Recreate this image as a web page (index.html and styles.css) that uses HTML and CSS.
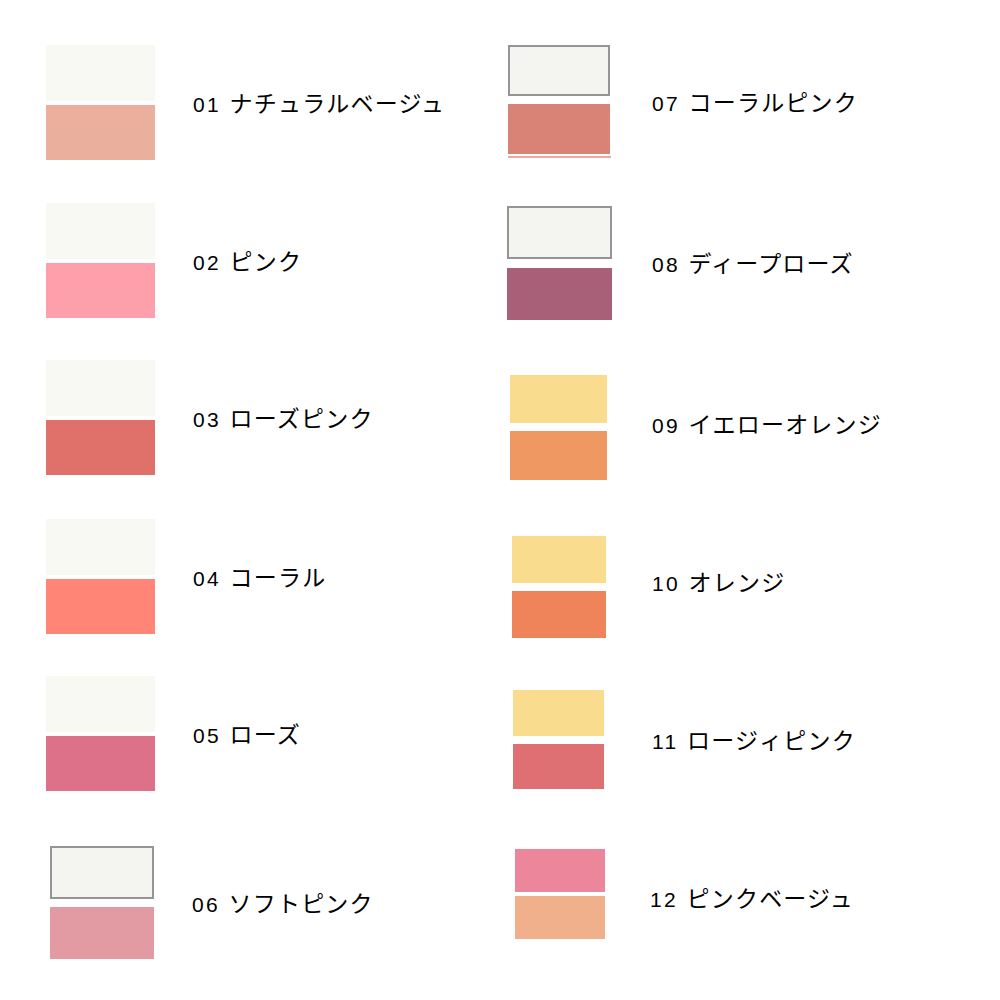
FILE: index.html
```html
<!DOCTYPE html>
<html lang="ja">
<head>
<meta charset="utf-8">
<title>カラーバリエーション</title>
<link rel="stylesheet" href="styles.css">
</head>
<body>
<main class="sheet">
  <section class="col col-left">
    <div class="item i01">
      <div class="swatch"><div class="chip top"></div><div class="chip bottom c01"></div></div>
      <p class="label"><span class="num">01</span> ナチュラルベージュ</p>
    </div>
    <div class="item i02">
      <div class="swatch"><div class="chip top"></div><div class="chip bottom c02"></div></div>
      <p class="label"><span class="num">02</span> ピンク</p>
    </div>
    <div class="item i03">
      <div class="swatch"><div class="chip top"></div><div class="chip bottom c03"></div></div>
      <p class="label"><span class="num">03</span> ローズピンク</p>
    </div>
    <div class="item i04">
      <div class="swatch"><div class="chip top"></div><div class="chip bottom c04"></div></div>
      <p class="label"><span class="num">04</span> コーラル</p>
    </div>
    <div class="item i05">
      <div class="swatch"><div class="chip top"></div><div class="chip bottom c05"></div></div>
      <p class="label"><span class="num">05</span> ローズ</p>
    </div>
    <div class="item i06">
      <div class="swatch"><div class="chip top framed"></div><div class="chip bottom c06"></div></div>
      <p class="label"><span class="num">06</span> ソフトピンク</p>
    </div>
  </section>
  <section class="col col-right">
    <div class="item i07">
      <div class="swatch"><div class="chip top framed"></div><div class="chip bottom c07"></div><div class="chip line"></div></div>
      <p class="label"><span class="num">07</span> コーラルピンク</p>
    </div>
    <div class="item i08">
      <div class="swatch"><div class="chip top framed"></div><div class="chip bottom c08"></div></div>
      <p class="label"><span class="num">08</span> ディープローズ</p>
    </div>
    <div class="item i09">
      <div class="swatch"><div class="chip top yellow"></div><div class="chip bottom c09"></div></div>
      <p class="label"><span class="num">09</span> イエローオレンジ</p>
    </div>
    <div class="item i10">
      <div class="swatch"><div class="chip top yellow"></div><div class="chip bottom c10"></div></div>
      <p class="label"><span class="num">10</span> オレンジ</p>
    </div>
    <div class="item i11">
      <div class="swatch"><div class="chip top yellow"></div><div class="chip bottom c11"></div></div>
      <p class="label"><span class="num">11</span> ロージィピンク</p>
    </div>
    <div class="item i12">
      <div class="swatch"><div class="chip top c12a"></div><div class="chip bottom c12b"></div></div>
      <p class="label"><span class="num">12</span> ピンクベージュ</p>
    </div>
  </section>
</main>
</body>
</html>
```

FILE: styles.css
```css
html, body {
  margin: 0;
  padding: 0;
  background: #ffffff;
}

body {
  width: 1000px;
  height: 1000px;
  overflow: hidden;
  font-family: "Liberation Sans", "Noto Sans CJK JP", sans-serif;
  color: #000000;
}

.sheet {
  display: grid;
  grid-template-columns: 461px 1fr;
  padding-left: 46px;
}

.col {
  display: flex;
  flex-direction: column;
}

.item {
  display: grid;
  align-items: center;
}

.col-left .item {
  grid-template-columns: 147px auto;
}

.col-right .item {
  grid-template-columns: 145px auto;
}

.label {
  margin: 0;
  padding-top: 3px;
  font-size: 23px;
  line-height: 24px;
  letter-spacing: 1.2px;
  word-spacing: 1px;
  white-space: nowrap;
}

.num {
  font-size: 21px;
  letter-spacing: 2.3px;
}

.swatch {
  display: flex;
  flex-direction: column;
}

.chip {
  box-sizing: border-box;
}

.top {
  background: #f8f9f3;
}

.framed {
  background: #f4f5f0;
  border: 2px solid #959595;
}

.yellow {
  background: #fadc8e;
}

/* left column */
.col-left {
  padding-top: 45px;
}

.col-left .swatch {
  width: 109px;
  gap: 4px;
}

.col-left .top {
  height: 56px;
}

.col-left .bottom {
  height: 55px;
}

.i02 {
  margin-top: 43px;
}

.i03 {
  margin-top: 42px;
}

.i04 {
  margin-top: 44px;
}

.i05 {
  margin-top: 42px;
}

.col-left .i06 {
  margin-top: 55px;
  grid-template-columns: 146px auto;
}

.i06 .swatch {
  width: 104px;
  margin-left: 4px;
  gap: 8px;
}

.i06 .top {
  height: 53px;
}

.i06 .bottom {
  height: 52px;
}

.c01 { background: #ebb09d; }
.c02 { background: #fea0ac; }
.c03 { background: #df706a; }
.c04 { background: #ff8677; }
.c05 { background: #dc7189; }
.c06 { background: #e29ba3; }

/* right column */
.col-right {
  padding-top: 45px;
}

.i07 .swatch {
  width: 102px;
  margin-left: 1px;
}

.i07 .top {
  height: 51px;
}

.i07 .bottom {
  height: 50px;
  margin-top: 8px;
}

.i07 .line {
  height: 2px;
  margin-top: 2px;
  width: 103px;
  background: #f2a6a6;
}

.c07 { background: #d98276; }

.i08 {
  margin-top: 48px;
}

.i08 .swatch {
  width: 105px;
  gap: 9px;
}

.i08 .top {
  height: 53px;
}

.i08 .bottom {
  height: 52px;
}

.c08 { background: #a86078; }

.i09 {
  margin-top: 55px;
}

.i09 .swatch {
  width: 97px;
  margin-left: 3px;
  gap: 8px;
}

.i09 .top {
  height: 48px;
}

.i09 .bottom {
  height: 49px;
}

.i09 .label {
  margin-bottom: 8px;
}

.c09 { background: #ef9862; }

.i10 {
  margin-top: 56px;
}

.i10 .swatch {
  width: 94px;
  margin-left: 5px;
  gap: 8px;
}

.i10 .top {
  height: 47px;
}

.i10 .bottom {
  height: 47px;
}

.i10 .label {
  margin-bottom: 10px;
}

.c10 { background: #ef845a; }

.i11 {
  margin-top: 52px;
}

.i11 .swatch {
  width: 91px;
  margin-left: 6px;
  gap: 8px;
}

.i11 .top {
  height: 46px;
}

.i11 .bottom {
  height: 45px;
}

.c11 { background: #de7074; }

.i12 {
  margin-top: 60px;
}

.i12 .swatch {
  width: 90px;
  margin-left: 8px;
  gap: 4px;
}

.i12 .top {
  height: 43px;
}

.i12 .bottom {
  height: 43px;
}

.i12 .label {
  margin-left: -2px;
  margin-top: 8px;
}

.c12a { background: #ec879b; }
.c12b { background: #f1b08c; }
```
